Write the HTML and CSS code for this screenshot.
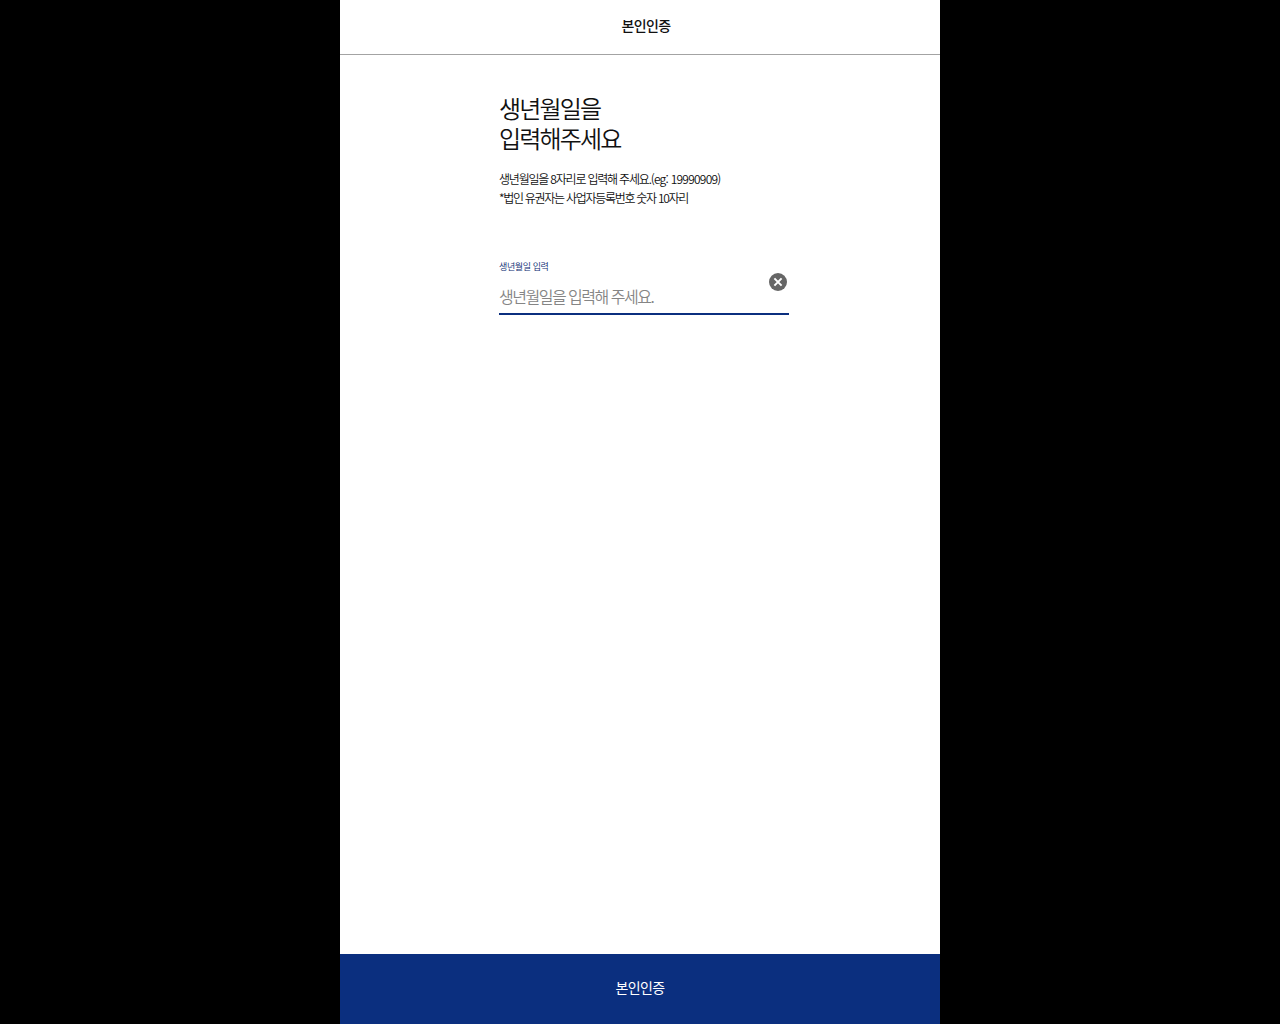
FILE: index.html
```html
<!DOCTYPE html>
<html lang="ko">
<head>
<meta charset="utf-8">
<title>본인인증</title>
<link rel="stylesheet" href="styles.css">
</head>
<body>
<div class="phone">
  <header class="top"><h1 class="top-title">본인인증</h1></header>
  <main class="main">
    <div class="content">
      <h2 class="headline">생년월일을<br>입력해주세요</h2>
      <p class="desc">생년월일을 8자리로 입력해 주세요.<span class="latin">(eg: 19990909)</span><br><span class="note">*법인 유권자는 사업자등록번호 숫자 10자리</span></p>
      <div class="field">
        <label class="field-label">생년월일 입력</label>
        <div class="field-row">
          <span class="placeholder">생년월일을 입력해 주세요.</span>
          <svg class="clear" width="18" height="18" viewBox="0 0 18 18" aria-hidden="true"><circle cx="9" cy="9" r="9" fill="#666"/><path d="M5.4 5.4l7.2 7.2M12.6 5.4l-7.2 7.2" stroke="#fff" stroke-width="2" fill="none"/></svg>
        </div>
      </div>
    </div>
  </main>
  <button class="submit"><span class="submit-text">본인인증</span></button>
</div>
</body>
</html>
```

FILE: styles.css
```css
* { box-sizing: border-box; }
html, body { margin: 0; height: 100%; background: #000; }
body {
  font-family: "Noto Sans CJK KR", "Liberation Sans", sans-serif;
  color: #111;
  display: flex;
  justify-content: center;
}
.phone {
  width: 600px;
  height: 1024px;
  background: #fff;
  display: flex;
  flex-direction: column;
}
.top {
  height: 55px;
  border-bottom: 1px solid #a3a3a3;
  display: flex;
  align-items: center;
  justify-content: center;
  padding: 0 0 4px 12px;
}
.top-title { margin: 0; font-size: 14px; font-weight: 500; letter-spacing: -0.6px; line-height: 20px; }
.main { flex: 1; display: flex; justify-content: center; }
.content { width: 290px; margin-left: 8px; padding-top: 38px; }
.headline { margin: 0; font-size: 24px; font-weight: 350; line-height: 30px; letter-spacing: -1.85px; color: #111; }
.desc { margin: 16px 0 0; font-size: 12px; font-weight: 350; line-height: 19px; letter-spacing: -1.2px; color: #111; }
.latin { letter-spacing: -0.75px; }
.note { letter-spacing: -1.28px; }
.field { margin-top: 48px; border-bottom: 2px solid #0b2f7f; height: 60px; display: flex; flex-direction: column; }
.field-label { margin-top: 5px; font-size: 9px; line-height: 14px; letter-spacing: -0.4px; color: #0a2a70; font-weight: 350; }
.field-row { display: flex; justify-content: space-between; align-items: flex-start; }
.placeholder { margin-top: 10px; font-size: 16px; font-weight: 350; line-height: 24px; letter-spacing: -1.5px; color: #858585; }
.clear { margin: -1px 2px 0 0; }
.submit {
  height: 70px;
  border: 0;
  background: #0b2f7f;
  color: #fff;
  font: 400 14px/20px "Noto Sans CJK KR", sans-serif;
  letter-spacing: -0.6px;
  padding: 0 0 4px;
}
.submit-text { display: block; }
```
